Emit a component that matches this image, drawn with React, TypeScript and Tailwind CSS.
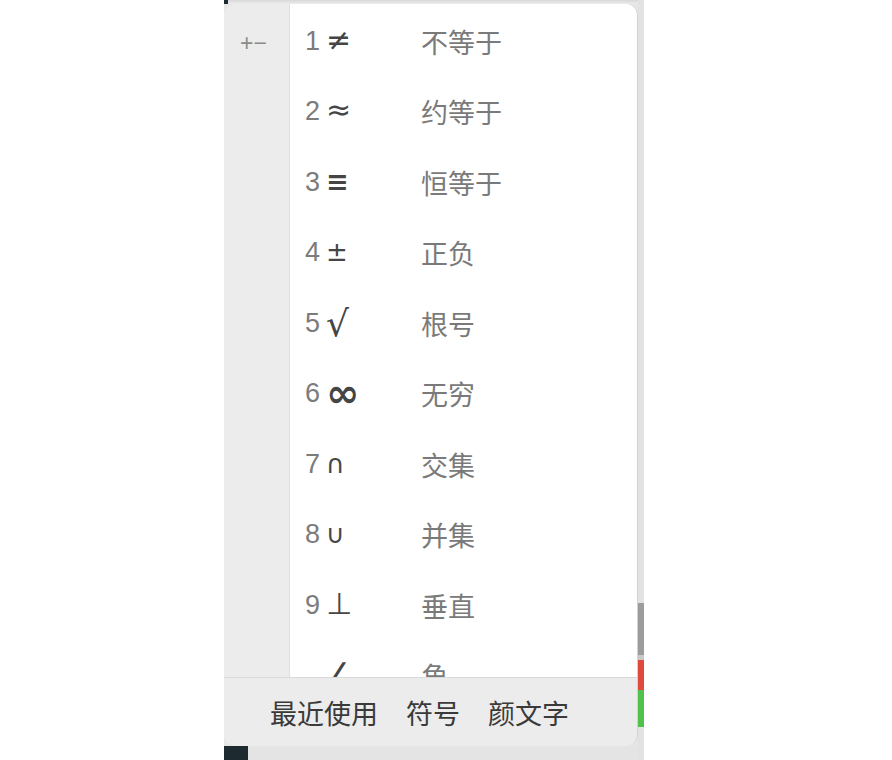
const cjk = { fontFamily: '"Noto Sans CJK SC", "Noto Sans", sans-serif' };
const latin = { fontFamily: '"Liberation Sans", Arial, sans-serif' };
const sym = { fontFamily: '"DejaVu Sans", sans-serif' };

// each symbol gets its own size so the glyphs match the reference
const rows = [
  { n: '1', s: '≠', label: '不等于', cls: 'text-[30px]' },
  { n: '2', s: '≈', label: '约等于', cls: 'text-[30px]' },
  { n: '3', s: '≡', label: '恒等于', cls: 'text-[27px] font-bold' },
  { n: '4', s: '±', label: '正负', cls: 'text-[26px]' },
  { n: '5', s: '√', label: '根号', cls: 'text-[36px] align-[-4px]' },
  { n: '6', s: '∞', label: '无穷', cls: 'text-[40px] font-bold align-[-5px]' },
  { n: '7', s: '∩', label: '交集', cls: 'text-[26px]' },
  { n: '8', s: '∪', label: '并集', cls: 'text-[26px]' },
  { n: '9', s: '⊥', label: '垂直', cls: 'text-[30px]' },
  { n: '\u00a0', s: '∠', label: '角', cls: 'text-[30px]' },
];

const tabs = ['最近使用', '符号', '颜文字'];

function SymbolRow({ n, s, label, cls }: { n: string; s: string; label: string; cls: string }) {
  return (
    <div className="h-[70.5px] shrink-0 flex items-center pl-[15px]">
      <div style={latin} className="w-[116px] h-[27px] text-[27px] leading-[27px] whitespace-nowrap">
        <span className="inline-block w-[15px] text-[#7c7c7c]">{n}</span>
        <span style={sym} className={`ml-[6px] leading-[0] text-[#454545] ${cls}`}>
          {s}
        </span>
      </div>
      <span style={cjk} className="text-[27px] leading-none text-[#7a7a7a]">
        {label}
      </span>
    </div>
  );
}

export default function App() {
  return (
    <div className="w-[892px] h-[760px] bg-white flex">
      <div className="ml-[224px] w-[420px] h-[760px] flex">
        <div className="w-[414px] h-full flex flex-col bg-[#e6e6e6]">
          <div className="h-[4px] flex">
            <div className="w-[4px] bg-[#1d2a30]" />
            <div className="flex-1 bg-gradient-to-b from-[#d8d8d8] to-[#ececec]" />
          </div>
          <div className="h-[742px] rounded-[12px] overflow-hidden flex flex-col border-r border-[#d2d2d2]">
            <div className="h-[673px] flex">
              <div className="w-[66px] bg-[#ececec] border-r border-[#e0e0e0] pt-[28px] pl-[16px]">
                <span style={latin} className="text-[23px] leading-none text-[#8a8a8a]">
                  +−
                </span>
              </div>
              <div className="flex-1 bg-white overflow-hidden flex flex-col pt-[2px]">
                {rows.map((r) => (
                  <SymbolRow key={r.label} {...r} />
                ))}
              </div>
            </div>
            <div className="flex-1 bg-[#ececec] border-t border-[#dadada] flex items-center pl-[46px] gap-[28px]">
              {tabs.map((t) => (
                <span key={t} style={cjk} className="text-[27px] leading-none text-[#3a3a3a]">
                  {t}
                </span>
              ))}
            </div>
          </div>
          <div className="h-[14px] flex">
            <div className="w-[24px] bg-[#1d2a30]" />
            <div className="flex-1 bg-[#e4e4e4]" />
          </div>
        </div>
        <div className="w-[6px] h-full flex flex-col">
          <div className="h-[603px] bg-[#e2e2e2]" />
          <div className="h-[52px] bg-[#9c9c9c]" />
          <div className="h-[5px] bg-[#c9c9c9]" />
          <div className="h-[30px] bg-[#e0493d]" />
          <div className="h-[37px] bg-[#52c14b]" />
          <div className="flex-1 bg-[#e2e2e2]" />
        </div>
      </div>
    </div>
  );
}
